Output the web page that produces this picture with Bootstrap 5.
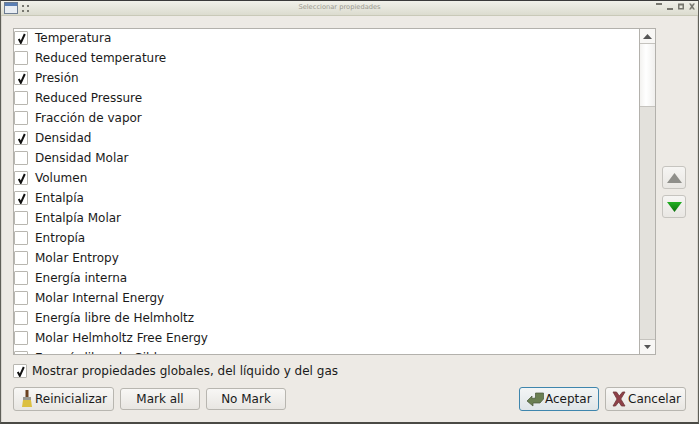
<!DOCTYPE html>
<html lang="es">
<head>
<meta charset="utf-8">
<title>Seleccionar propiedades</title>
<link href="https://cdn.jsdelivr.net/npm/bootstrap@5.3.0/dist/css/bootstrap.min.css" rel="stylesheet">
<style>
html,body{height:100%;margin:0;overflow:hidden;background:#edeae5}
body{font-family:"DejaVu Sans",sans-serif;font-size:12px;color:#1a1a1a}
.win{width:699px;height:424px;background:#edeae5;border-left:1px solid #5f5f58;border-right:1px solid #5f5f58;border-bottom:2px solid #4a4a45;border-top:1px solid #3a3a3a}
.tbar{height:15px;background:linear-gradient(#f1f1ea,#dcdccf);border-bottom:1px solid #c9c9b8;position:relative;padding:0 3px}
.ttl{position:absolute;left:0;right:20px;top:0;text-align:center;font-size:6.7px;line-height:13px;color:#9a9a90}
.inner{padding:12px 11px 0 11px;border-left:1px solid #d8d6d0;border-right:1px solid #d8d6d0}
.lbox{width:643px;height:327px;border:1px solid #b3b1ac;background:#fff}
.rows{overflow:hidden;height:325px}
.rw{height:20px;flex-shrink:0;line-height:20px;white-space:nowrap;gap:7px}
.rw:first-child{margin-top:-1px}
.cb{width:14px;height:14px;border:1px solid #b8b6b0;background:#fff;flex-shrink:0;border-radius:1px}
.sbar{width:16px;border-left:1px solid #b3b1ac;background:#e3e1dc;flex-shrink:0}
.sbtn{height:15px;background:#f8f7f5}
.sbtn.up{border-bottom:1px solid #c5c3be}
.sbtn.dn{border-top:1px solid #c5c3be}
.thumb{height:63px;background:linear-gradient(90deg,#f3f2f0,#fff 40%,#f0efed);border-bottom:1px solid #c5c3be}
.side{margin-left:6px;padding-top:138px;gap:6px}
.abtn{width:24px;height:23px;border:1px solid #c6c4bf;border-radius:3px;background:linear-gradient(#f6f5f3,#e9e7e3)}
.chkline{padding-top:9px;height:32px;line-height:14px;gap:5px}
.pbtn{height:24px;border:1px solid #b8b6b0;border-radius:3px;background:linear-gradient(#f8f7f5,#e8e6e2);line-height:22px;color:#1a1a1a;white-space:nowrap;text-align:center}
.pbtn.def{border-color:#3f86ad;background:linear-gradient(#f3f5f5,#dfe5e8)}
.pflat{height:22px;margin-top:1px;line-height:20px;width:80px;margin-left:6px}
.preset{width:101px;padding-left:6px;gap:1px}
.pok{width:80px;padding-left:7px;margin-left:auto;gap:0}
.pno{width:81px;margin-left:6px;padding-left:6px;gap:2px}
.spacer{flex:1}
</style>
</head>
<body>
<div class="win d-flex flex-column">
  <div class="tbar d-flex align-items-center">
    <svg width="14" height="12" viewBox="0 0 14 12"><rect x=".5" y=".5" width="13" height="11" fill="#e8edf3" stroke="#6d7d92"/><rect x="1" y="1" width="12" height="3" fill="#5a7fb5"/></svg>
    <svg class="ms-1" width="7" height="7" viewBox="0 0 7 7" fill="#77776f"><rect width="2" height="2"/><rect x="5" width="2" height="2"/><rect y="5" width="2" height="2"/><rect x="5" y="5" width="2" height="2"/></svg>
    <div class="ttl">Seleccionar propiedades</div>
    <span class="spacer"></span>
    <svg width="39" height="12" viewBox="0 0 39 12" fill="#77776f">
      <rect x="0" y="1" width="6" height="2"/><rect x="11" y="6" width="6" height="2"/>
      <path d="M22 1.500h6v6h-6zM23.500 3.500v2.500h3V3.500z" fill-rule="evenodd"/>
      <path d="M33 1.500h2l1 1.800 1-1.800h2l-2 3 2 3h-2l-1-1.800-1 1.800h-2l2-3z"/>
    </svg>
  </div>
  <div class="inner flex-grow-1 d-flex flex-column">
    <div class="d-flex">
      <div class="lbox d-flex flex-shrink-0">
        <div class="rows flex-grow-1 d-flex flex-column">
          <div class="rw d-flex align-items-center"><span class="cb d-flex align-items-center justify-content-center"><svg width="10" height="11" viewBox="0 0 10 11"><path d="M2.800 6L4.800 9.800 8.800 1" fill="none" stroke="#111" stroke-width="2"/></svg></span><span>Temperatura</span></div>
          <div class="rw d-flex align-items-center"><span class="cb"></span><span>Reduced temperature</span></div>
          <div class="rw d-flex align-items-center"><span class="cb d-flex align-items-center justify-content-center"><svg width="10" height="11" viewBox="0 0 10 11"><path d="M2.800 6L4.800 9.800 8.800 1" fill="none" stroke="#111" stroke-width="2"/></svg></span><span>Presión</span></div>
          <div class="rw d-flex align-items-center"><span class="cb"></span><span>Reduced Pressure</span></div>
          <div class="rw d-flex align-items-center"><span class="cb"></span><span>Fracción de vapor</span></div>
          <div class="rw d-flex align-items-center"><span class="cb d-flex align-items-center justify-content-center"><svg width="10" height="11" viewBox="0 0 10 11"><path d="M2.800 6L4.800 9.800 8.800 1" fill="none" stroke="#111" stroke-width="2"/></svg></span><span>Densidad</span></div>
          <div class="rw d-flex align-items-center"><span class="cb"></span><span>Densidad Molar</span></div>
          <div class="rw d-flex align-items-center"><span class="cb d-flex align-items-center justify-content-center"><svg width="10" height="11" viewBox="0 0 10 11"><path d="M2.800 6L4.800 9.800 8.800 1" fill="none" stroke="#111" stroke-width="2"/></svg></span><span>Volumen</span></div>
          <div class="rw d-flex align-items-center"><span class="cb d-flex align-items-center justify-content-center"><svg width="10" height="11" viewBox="0 0 10 11"><path d="M2.800 6L4.800 9.800 8.800 1" fill="none" stroke="#111" stroke-width="2"/></svg></span><span>Entalpía</span></div>
          <div class="rw d-flex align-items-center"><span class="cb"></span><span>Entalpía Molar</span></div>
          <div class="rw d-flex align-items-center"><span class="cb"></span><span>Entropía</span></div>
          <div class="rw d-flex align-items-center"><span class="cb"></span><span>Molar Entropy</span></div>
          <div class="rw d-flex align-items-center"><span class="cb"></span><span>Energía interna</span></div>
          <div class="rw d-flex align-items-center"><span class="cb"></span><span>Molar Internal Energy</span></div>
          <div class="rw d-flex align-items-center"><span class="cb"></span><span>Energía libre de Helmholtz</span></div>
          <div class="rw d-flex align-items-center"><span class="cb"></span><span>Molar Helmholtz Free Energy</span></div>
          <div class="rw d-flex align-items-center"><span class="cb"></span><span>Energía libre de Gibbs</span></div>
        </div>
        <div class="sbar d-flex flex-column">
          <div class="sbtn up d-flex align-items-center justify-content-center"><svg width="9" height="5" viewBox="0 0 9 5"><path d="M4.500 0L9 5H0z" fill="#555"/></svg></div>
          <div class="thumb"></div>
          <div class="flex-grow-1"></div>
          <div class="sbtn dn d-flex align-items-center justify-content-center"><svg width="7" height="4" viewBox="0 0 7 4"><path d="M0 0h7L3.500 4z" fill="#555"/></svg></div>
        </div>
      </div>
      <div class="side d-flex flex-column">
        <div class="abtn d-flex align-items-center justify-content-center"><svg width="15" height="10" viewBox="0 0 15 10"><path d="M7.500 0L15 10H0z" fill="#8f8f8a"/></svg></div>
        <div class="abtn d-flex align-items-center justify-content-center"><svg width="15" height="10" viewBox="0 0 15 10"><defs><linearGradient id="g" x1="0" y1="0" x2="0" y2="1"><stop offset="0" stop-color="#22b022"/><stop offset="1" stop-color="#0c700c"/></linearGradient></defs><path d="M0 0h15L7.500 10z" fill="url(#g)"/></svg></div>
      </div>
    </div>
    <div class="chkline d-flex align-items-start">
      <span class="cb d-flex align-items-center justify-content-center"><svg width="10" height="11" viewBox="0 0 10 11"><path d="M2.800 6L4.800 9.800 8.800 1" fill="none" stroke="#111" stroke-width="2"/></svg></span>
      <span>Mostrar propiedades globales, del líquido y del gas</span>
    </div>
    <div class="d-flex">
      <div class="pbtn preset d-flex align-items-center">
        <svg width="14" height="20" viewBox="0 0 14 20"><rect x="5.500" y="1" width="3" height="8" fill="#6b4220"/><rect x="3" y="8" width="8" height="3" fill="#9a9a92"/><path d="M3 11h8l1 7H2z" fill="#dcc040"/></svg><span>Reinicializar</span>
      </div>
      <div class="pbtn pflat">Mark all</div>
      <div class="pbtn pflat">No Mark</div>
      <div class="pbtn def pok d-flex align-items-center">
        <svg width="18" height="16" viewBox="0 0 18 16"><path d="M0 10l5-5v2.500l3.500-.5V2h8v6L13 12H6v3z" fill="#6a7f52" stroke="#47583a" stroke-width=".7"/></svg><span>Aceptar</span>
      </div>
      <div class="pbtn pno d-flex align-items-center">
        <svg width="14" height="16" viewBox="0 0 14 16"><path d="M1 1h3.500l2.800 4L10.500 1H13L8.800 8l4.200 7H9.500L6.800 11 3.500 15H1l4-7z" fill="#8f4048" stroke="#6f3a3a" stroke-width=".8"/></svg><span>Cancelar</span>
      </div>
    </div>
  </div>
</div>
</body>
</html>
